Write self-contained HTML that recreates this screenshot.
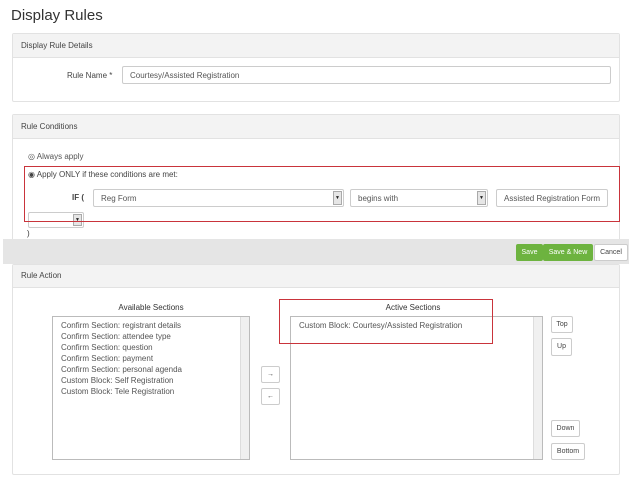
<!DOCTYPE html>
<html><head><style>
*{box-sizing:border-box;margin:0;padding:0}
body{width:634px;height:484px;background:#fff;font-family:"Liberation Sans",sans-serif;color:#333;position:relative;overflow:hidden;font-size:8px}
.a{position:absolute}
.panel{position:absolute;border:1px solid #e2e2e2;border-radius:2px;background:#fff}
.ph{position:absolute;left:0;right:0;top:0;background:#f3f3f3;border-bottom:1px solid #e2e2e2;font-size:8px;padding-left:8px;color:#444}
.inp{position:absolute;border:1px solid #ccc;border-radius:2px;background:#fff;color:#555;font-size:8px;padding-left:7px;display:flex;align-items:center}
.arr{position:absolute;right:1px;top:1px;bottom:1px;width:9px;background:#e6e6e6;border:1px solid #aaa;font-size:5px;display:flex;align-items:center;justify-content:center;color:#222}
.btn{position:absolute;border:1px solid #ccc;border-radius:2px;background:#fff;font-size:7px;line-height:15px;text-align:center;color:#444}
.red{position:absolute;border:1.5px solid #c9343b}
.list{position:absolute;border:1px solid #bbb;background:#fff;font-size:8px;line-height:11px;color:#555;padding:3px 8px}
.sb{position:absolute;right:0;top:0;bottom:0;width:9px;background:#f0f0f0;border-left:1px solid #ddd}
</style></head><body>
<div class="a" style="left:11px;top:7px;font-size:15px;color:#333">Display Rules</div>

<div class="panel" style="left:12px;top:33px;width:608px;height:69px">
<div class="ph" style="height:24px;line-height:23px">Display Rule Details</div>
</div>
<div class="a" style="left:67px;top:71px;font-size:8px;color:#444">Rule Name *</div>
<div class="inp" style="left:122px;top:66px;width:489px;height:18px">Courtesy/Assisted Registration</div>

<div class="panel" style="left:12px;top:114px;width:608px;height:130px;border-bottom:none">
<div class="ph" style="height:24px;line-height:23px">Rule Conditions</div>
</div>
<div class="a" style="left:28px;top:152px;font-size:8px;color:#555">◎ Always apply</div>
<div class="a" style="left:28px;top:170px;font-size:8px;color:#444">◉ Apply ONLY if these conditions are met:</div>
<div class="a" style="left:72px;top:193px;font-size:8px;font-weight:bold;color:#444">IF (</div>
<div class="inp" style="left:93px;top:189px;width:251px;height:18px">Reg Form<div class="arr">▼</div></div>
<div class="inp" style="left:350px;top:189px;width:138px;height:18px">begins with<div class="arr">▼</div></div>
<div class="inp" style="left:496px;top:189px;width:112px;height:18px">Assisted Registration Form</div>
<div class="inp" style="left:28px;top:212px;width:56px;height:16px"><div class="arr">▼</div></div>
<div class="red" style="left:24px;top:166px;width:596px;height:56px"></div>
<div class="a" style="left:27px;top:229px;font-size:8px">)</div>

<div class="a" style="left:3px;top:239px;width:626px;height:25px;background:#e5e5e5"></div>
<div class="btn" style="left:516px;top:244px;width:27px;height:17px;background:#6db33f;border-color:#6db33f;color:#fff">Save</div>
<div class="btn" style="left:543px;top:244px;width:50px;height:17px;background:#6db33f;border-color:#6db33f;color:#fff">Save &amp; New</div>
<div class="btn" style="left:594px;top:244px;width:34px;height:17px">Cancel</div>

<div class="panel" style="left:12px;top:264px;width:608px;height:211px">
<div class="ph" style="height:23px;line-height:22px">Rule Action</div>
</div>
<div class="a" style="left:52px;top:303px;width:198px;text-align:center;font-size:8px">Available Sections</div>
<div class="list" style="left:52px;top:316px;width:198px;height:144px">Confirm Section: registrant details<br>Confirm Section: attendee type<br>Confirm Section: question<br>Confirm Section: payment<br>Confirm Section: personal agenda<br>Custom Block: Self Registration<br>Custom Block: Tele Registration<div class="sb"></div></div>
<div class="btn" style="left:261px;top:366px;width:19px;height:17px">→</div>
<div class="btn" style="left:261px;top:388px;width:19px;height:17px">←</div>
<div class="a" style="left:290px;top:303px;width:246px;text-align:center;font-size:8px">Active Sections</div>
<div class="list" style="left:290px;top:316px;width:253px;height:144px">Custom Block: Courtesy/Assisted Registration<div class="sb"></div></div>
<div class="red" style="left:279px;top:299px;width:214px;height:45px"></div>
<div class="btn" style="left:551px;top:316px;width:22px;height:17px">Top</div>
<div class="btn" style="left:551px;top:338px;width:21px;height:18px">Up</div>
<div class="btn" style="left:551px;top:420px;width:29px;height:17px">Down</div>
<div class="btn" style="left:551px;top:443px;width:34px;height:17px">Bottom</div>
</body></html>
